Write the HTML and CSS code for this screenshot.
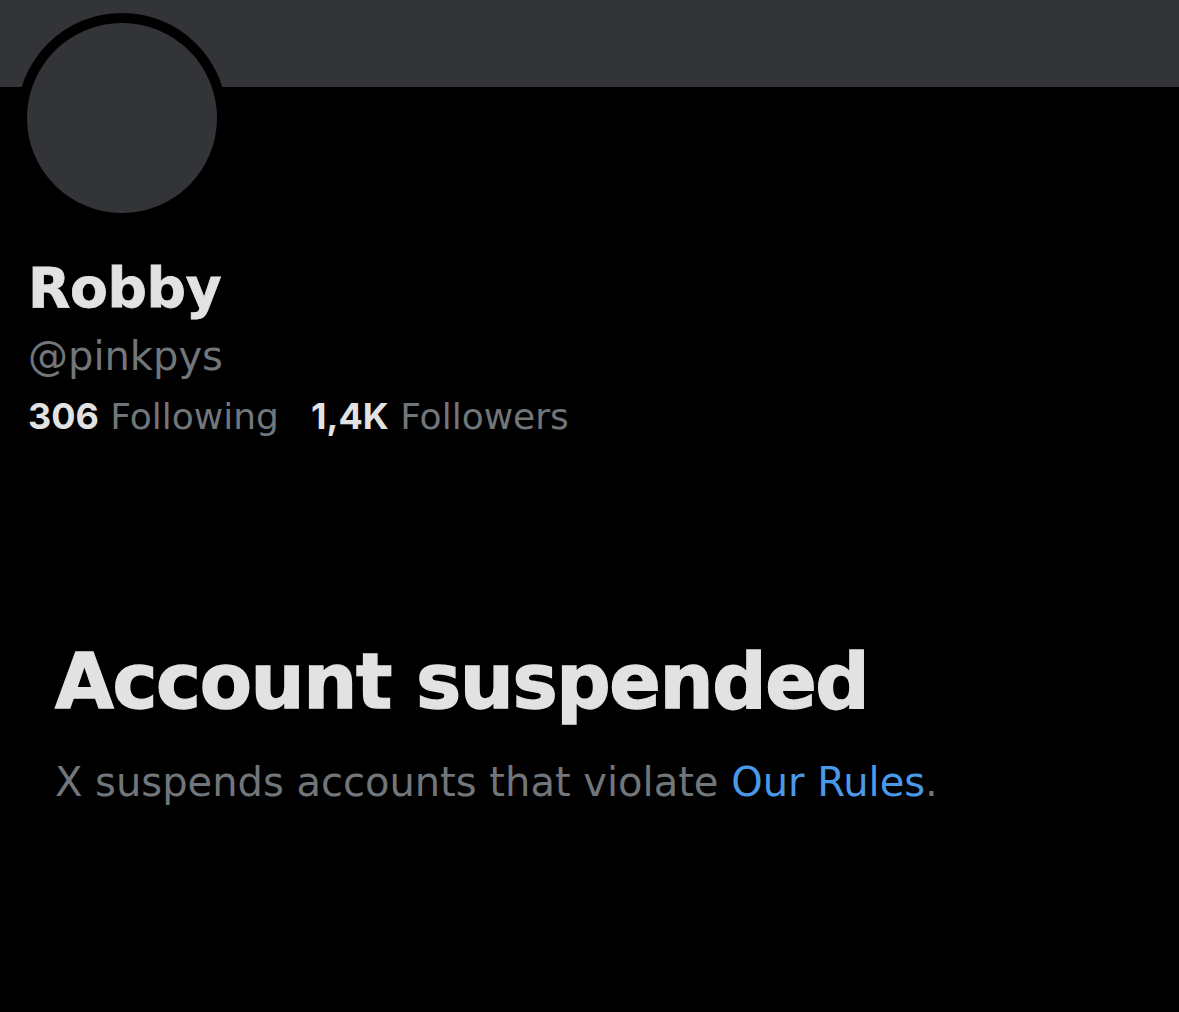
FILE: index.html
```html
<!DOCTYPE html>
<html>
<head>
<meta charset="utf-8">
<link rel="stylesheet" href="styles.css">
</head>
<body>
<div class="page">
  <div class="banner"></div>
  <div class="profile">
    <div class="avatar-wrap"><div class="avatar"></div></div>
    <div class="name">Robby</div>
    <div class="handle">@pinkpys</div>
    <div class="stats">
      <span class="stat"><b>306</b> Following</span>
      <span class="stat"><b>1,4K</b> Followers</span>
    </div>
  </div>
  <div class="suspended">
    <h1 class="title">Account suspended</h1>
    <p class="desc">X suspends accounts that violate <span class="link">Our Rules</span>.</p>
  </div>
</div>
</body>
</html>
```
FILE: styles.css
```css
html, body {
  margin: 0;
  padding: 0;
  background: #000;
}
.page {
  width: 1179px;
  height: 1012px;
  background: #000;
  font-family: "DejaVu Sans", "Noto Sans", sans-serif;
  overflow: hidden;
}
.banner {
  height: 87px;
  background: #333438;
}
.profile {
  padding-left: 28px;
}
.avatar-wrap {
  width: 190px;
  height: 190px;
  margin-top: -74px;
  margin-left: -11px;
  border: 10px solid #000;
  border-radius: 50%;
  background: #000;
}
.avatar {
  width: 190px;
  height: 190px;
  border-radius: 50%;
  background: #333438;
}
.name {
  margin-top: 33px;
  font-size: 55px;
  font-weight: 700;
  color: #e2e2e2;
  line-height: 64px;
  letter-spacing: -0.3px;
  -webkit-text-stroke: 0.8px #e2e2e2;
}
.handle {
  margin-top: 11px;
  font-size: 40px;
  color: #71767b;
  line-height: 50px;
}
.stats {
  display: flex;
  gap: 32px;
  margin-top: 10px;
  font-size: 36px;
  color: #71767b;
  line-height: 50px;
}
.stat b {
  font-family: Inter, "DejaVu Sans", sans-serif;
  font-size: 36px;
  color: #e2e2e2;
  font-weight: 700;
}
.suspended {
  padding-left: 55px;
  margin-top: 195px;
}
.title {
  margin: 0;
  font-size: 76px;
  font-weight: 700;
  color: #e2e2e2;
  line-height: 90px;
  letter-spacing: -1.4px;
  -webkit-text-stroke: 1.4px #e2e2e2;
}
.desc {
  margin: 30px 0 0;
  font-size: 40px;
  color: #71767b;
  line-height: 50px;
}
.link {
  color: #4a99e9;
}
```
